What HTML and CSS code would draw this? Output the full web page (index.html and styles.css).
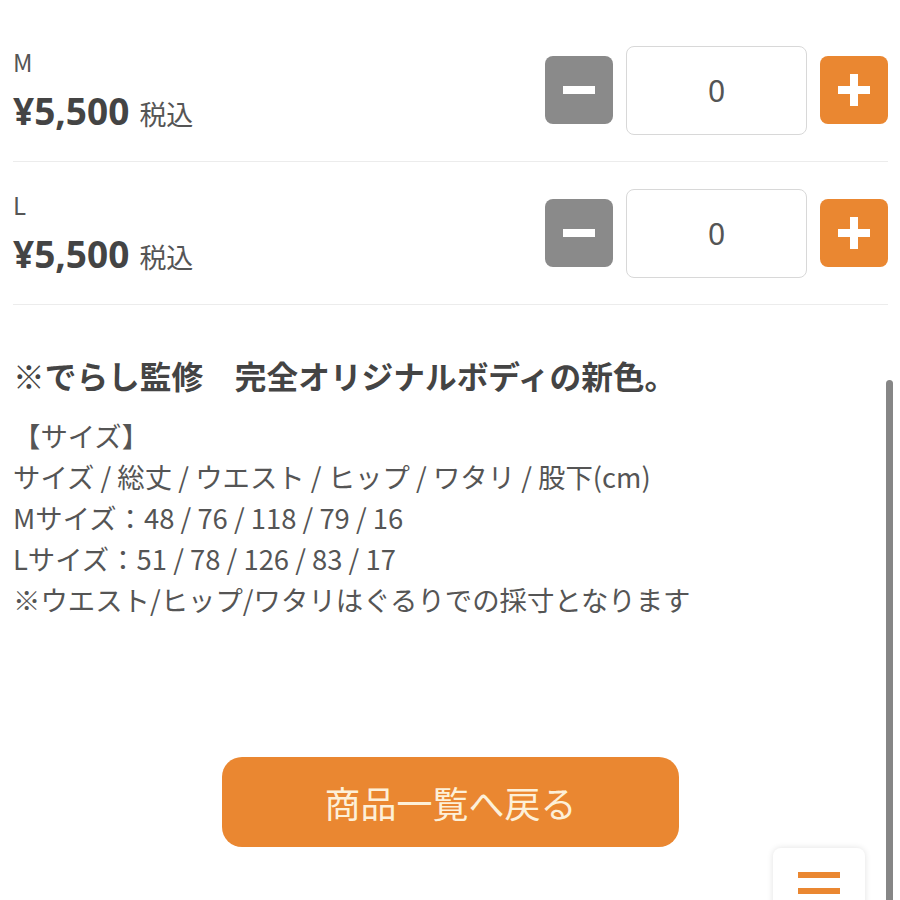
FILE: index.html
```html
<!DOCTYPE HTML>
<html lang=ja>
  <head>
    <meta charset=utf-8>
    <title>商品詳細</title>
    <meta name=viewport content=width=device-width,initial-scale=1>
    <link rel="stylesheet" href="styles.css">
  </head>
  <body>
    <div class=container>
      <div class=variants>
        <div class=variant>
          <div class=info>
            <p class=size>M</p>
            <p class=price>¥5,500<span class=tax>税込</span></p>
          </div>
          <div class=qty>
            <button class="btn minus" type=button></button>
            <input class=count type=text value=0>
            <button class="btn plus" type=button></button>
          </div>
        </div>
        <div class=variant>
          <div class=info>
            <p class=size>L</p>
            <p class=price>¥5,500<span class=tax>税込</span></p>
          </div>
          <div class=qty>
            <button class="btn minus" type=button></button>
            <input class=count type=text value=0>
            <button class="btn plus" type=button></button>
          </div>
        </div>
      </div>

      <div class=description>
        <h2>※でらし監修　完全オリジナルボディの新色。</h2>
        <p>【サイズ】<br>
        サイズ / 総丈 / ウエスト / ヒップ / ワタリ / 股下(cm)<br>
        Mサイズ：48 / 76 / 118 / 79 / 16<br>
        Lサイズ：51 / 78 / 126 / 83 / 17<br>
        ※ウエスト/ヒップ/ワタリはぐるりでの採寸となります</p>
      </div>

      <div class=back>
        <a href=# class=backButton>商品一覧へ戻る</a>
      </div>
    </div>

    <div class=menu><span></span><span></span><span></span></div>
    <div class=scrollbar></div>
  </body>
</html>
```

FILE: styles.css
```css
html, body {
  margin: 0;
  width: 100%;
  background: #fff;
}
body {
  font-family: "Noto Sans CJK JP", "Noto Sans", sans-serif;
  color: #4a4a4a;
  overflow: hidden;
}
.container {
  padding: 19px 12px 0 13px;
}
.variant {
  display: flex;
  justify-content: space-between;
  align-items: center;
  height: 142px;
  border-bottom: 1px solid #ececec;
}
.info {
  margin-top: 4px;
}
.info p {
  margin: 0;
}
.size {
  font-size: 24px;
  line-height: 30px;
  color: #555;
}
.info .price {
  margin-top: 10px;
  font-family: "Noto Sans", sans-serif;
  font-weight: bold;
  font-size: 37px;
  line-height: 48px;
  color: #444;
}
.tax {
  font-family: "Noto Sans CJK JP", sans-serif;
  font-weight: normal;
  font-size: 27px;
  margin-left: 10px;
  color: #555;
}
.qty {
  display: flex;
  align-items: center;
  gap: 13px;
}
.btn {
  position: relative;
  width: 68px;
  height: 68px;
  border: none;
  border-radius: 8px;
  padding: 0;
}
.minus {
  background: #8a8a8a;
}
.plus {
  background: #ea8731;
}
.btn::before, .plus::after {
  content: "";
  position: absolute;
  left: 50%;
  top: 50%;
  width: 32px;
  height: 8px;
  margin: -4px 0 0 -16px;
  background: #fff;
}
.plus::after {
  width: 8px;
  height: 32px;
  margin: -16px 0 0 -4px;
}
.count {
  width: 179px;
  height: 87px;
  border: 1px solid #d8d8d8;
  border-radius: 8px;
  padding: 0;
  text-align: center;
  font-family: "Noto Sans", sans-serif;
  font-size: 30px;
  color: #555;
}
.description {
  padding-top: 48px;
}
.description h2 {
  margin: 0 0 18px;
  font-size: 31.7px;
  line-height: 44px;
  color: #444;
}
.description p {
  margin: 0;
  font-size: 27.4px;
  line-height: 41px;
  color: #555;
}
.back {
  display: flex;
  justify-content: center;
  padding-top: 137px;
}
.backButton {
  display: flex;
  align-items: center;
  justify-content: center;
  width: 457px;
  height: 90px;
  border-radius: 20px;
  background: #ea8731;
  color: #fdf0d8;
  font-size: 36px;
  text-decoration: none;
}
.menu {
  position: fixed;
  left: 773px;
  top: 848px;
  width: 92px;
  height: 90px;
  background: #fff;
  border-radius: 8px;
  box-shadow: 0 0 6px rgba(0, 0, 0, .12);
  display: flex;
  flex-direction: column;
  align-items: center;
  gap: 10px;
  padding-top: 24px;
  box-sizing: border-box;
}
.menu span {
  width: 42px;
  height: 6px;
  background: #ea8731;
}
.scrollbar {
  position: fixed;
  left: 886px;
  top: 380px;
  width: 7px;
  bottom: 0;
  background: #868686;
  border-radius: 4px 4px 0 0;
}
```
